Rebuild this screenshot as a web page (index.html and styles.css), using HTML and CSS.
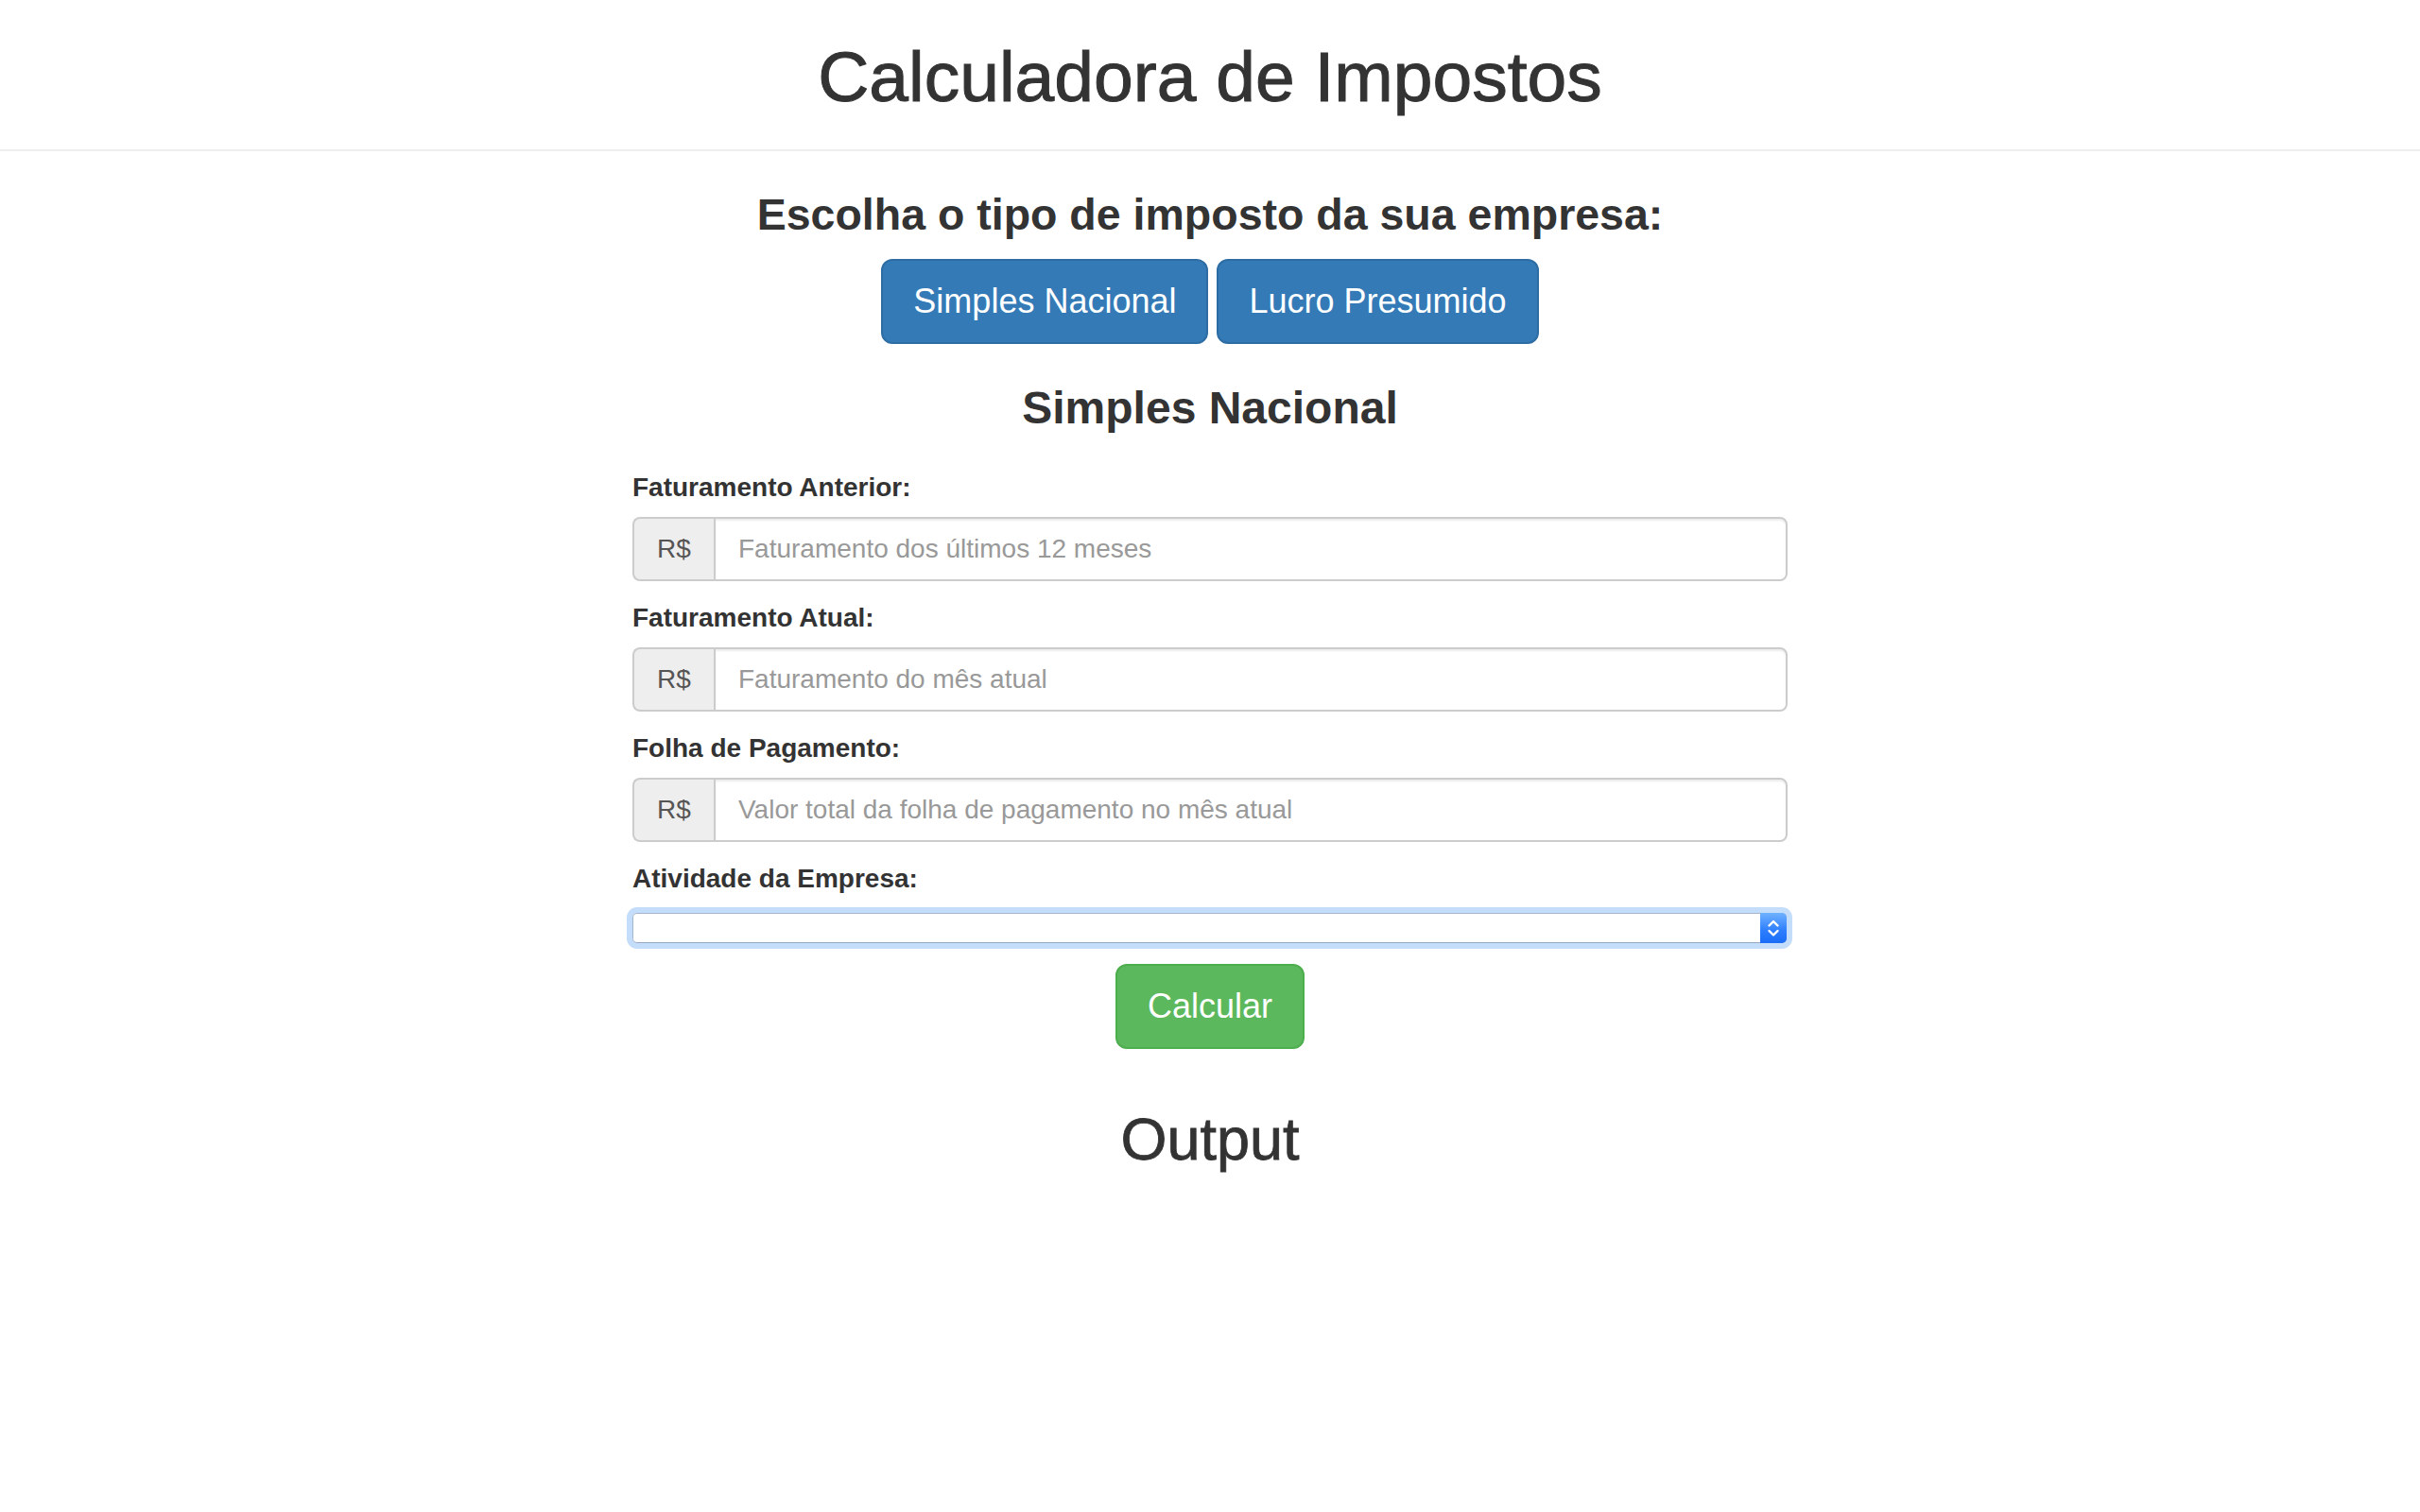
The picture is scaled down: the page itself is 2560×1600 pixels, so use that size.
FILE: index.html
```html
<!DOCTYPE html>
<html lang="pt-BR">
<head>
<meta charset="utf-8">
<title>Calculadora de Impostos</title>
<link rel="stylesheet" href="styles.css">
</head>
<body>
<header class="page-header">
  <h1 class="title">Calculadora de Impostos</h1>
</header>
<main class="content">
  <h3 class="choose">Escolha o tipo de imposto da sua empresa:</h3>
  <div class="tabs">
    <button class="btn btn-primary" type="button">Simples Nacional</button>
    <button class="btn btn-primary" type="button">Lucro Presumido</button>
  </div>
  <h3 class="section-title">Simples Nacional</h3>
  <form class="tax-form">
    <div class="form-group">
      <label class="field-label">Faturamento Anterior:</label>
      <div class="input-group">
        <span class="addon">R$</span>
        <input class="field" type="text" placeholder="Faturamento dos últimos 12 meses">
      </div>
    </div>
    <div class="form-group">
      <label class="field-label">Faturamento Atual:</label>
      <div class="input-group">
        <span class="addon">R$</span>
        <input class="field" type="text" placeholder="Faturamento do mês atual">
      </div>
    </div>
    <div class="form-group">
      <label class="field-label">Folha de Pagamento:</label>
      <div class="input-group">
        <span class="addon">R$</span>
        <input class="field" type="text" placeholder="Valor total da folha de pagamento no mês atual">
      </div>
    </div>
    <div class="form-group select-group">
      <label class="field-label">Atividade da Empresa:</label>
      <div class="select-wrap">
        <select class="select"><option></option></select>
        <span class="select-arrow">
          <svg width="28" height="32" viewBox="0 0 28 32" aria-hidden="true">
            <polyline points="9.5,13.5 14,9 18.5,13.5" fill="none" stroke="#fff" stroke-width="2.4" stroke-linecap="round" stroke-linejoin="round"/>
            <polyline points="9.5,19 14,23.5 18.5,19" fill="none" stroke="#fff" stroke-width="2.4" stroke-linecap="round" stroke-linejoin="round"/>
          </svg>
        </span>
      </div>
    </div>
    <div class="actions">
      <button class="btn btn-success" type="button">Calcular</button>
    </div>
  </form>
  <h2 class="output">Output</h2>
</main>
</body>
</html>
```

FILE: styles.css
```css
html, body {
  margin: 0;
  padding: 0;
  background: #fff;
}

body {
  font-family: "Liberation Sans", Arial, Helvetica, sans-serif;
  font-size: 28px;
  line-height: 40px;
  color: #333;
}

.page-header {
  padding: 40px 0 35px;
  border-bottom: 2px solid #eee;
  text-align: center;
}

.title {
  margin: 0;
  font-size: 75px;
  font-weight: normal;
  line-height: 1.1;
  -webkit-text-stroke: 1px #333;
}

.content {
  display: flex;
  flex-direction: column;
  align-items: center;
}

.choose {
  margin: 42px 0 21px;
  font-size: 46.5px;
  font-weight: bold;
  line-height: 1.1;
}

.tabs {
  display: flex;
  justify-content: center;
  gap: 9px;
}

.btn {
  font-family: inherit;
  font-size: 36px;
  line-height: 48px;
  padding: 19px 32px;
  border: 2px solid transparent;
  border-radius: 12px;
  color: #fff;
  cursor: pointer;
}

.btn-primary {
  background: #337ab7;
  border-color: #2e6da4;
}

.btn-success {
  background: #5cb85c;
  border-color: #4cae4c;
}

.section-title {
  margin: 42px 0 38px;
  font-size: 48px;
  font-weight: bold;
  line-height: 1.1;
}

.tax-form {
  width: 1222px;
  display: flex;
  flex-direction: column;
}

.form-group {
  display: flex;
  flex-direction: column;
  margin-bottom: 19px;
}

.field-label {
  font-weight: bold;
  margin-bottom: 11px;
}

.input-group {
  display: flex;
  height: 68px;
}

.addon {
  display: flex;
  align-items: center;
  justify-content: center;
  width: 84px;
  background: #eee;
  color: #555;
  border: 2px solid #ccc;
  border-right: none;
  border-radius: 8px 0 0 8px;
}

.field {
  flex: 1;
  min-width: 0;
  font-family: inherit;
  font-size: 28px;
  color: #555;
  padding: 12px 24px;
  border: 2px solid #ccc;
  border-radius: 0 8px 8px 0;
  box-shadow: inset 0 2px 2px rgba(0, 0, 0, 0.075);
  outline: none;
}

.field::placeholder {
  color: #999;
}

.select-group {
  margin-bottom: 0;
}

.select-group .field-label {
  margin-bottom: 16px;
}

.select-wrap {
  position: relative;
  height: 32px;
  margin-left: 0;
  margin-right: 1px;
  border-radius: 5px;
  box-shadow: 0 0 0 6px #c4ddfb;
}

.select {
  display: block;
  width: 100%;
  height: 32px;
  margin: 0;
  padding: 0 36px 0 8px;
  font-family: inherit;
  font-size: 22px;
  background: #fff;
  border: 1px solid #a4b6cd;
  border-bottom-color: #94a8c0;
  border-radius: 5px;
  appearance: none;
  -webkit-appearance: none;
  outline: none;
}

.select-arrow {
  position: absolute;
  top: 0;
  right: 0;
  width: 28px;
  height: 32px;
  border-radius: 0 5px 5px 0;
  background: linear-gradient(#6fb2ff, #2c7dff 60%, #1a6df5);
  display: flex;
  align-items: center;
  justify-content: center;
}

.actions {
  display: flex;
  justify-content: center;
  margin-top: 22px;
}

.output {
  margin: 61px 0 0;
  font-size: 63px;
  font-weight: normal;
  line-height: 1.1;
  -webkit-text-stroke: 0.8px #333;
}
```
